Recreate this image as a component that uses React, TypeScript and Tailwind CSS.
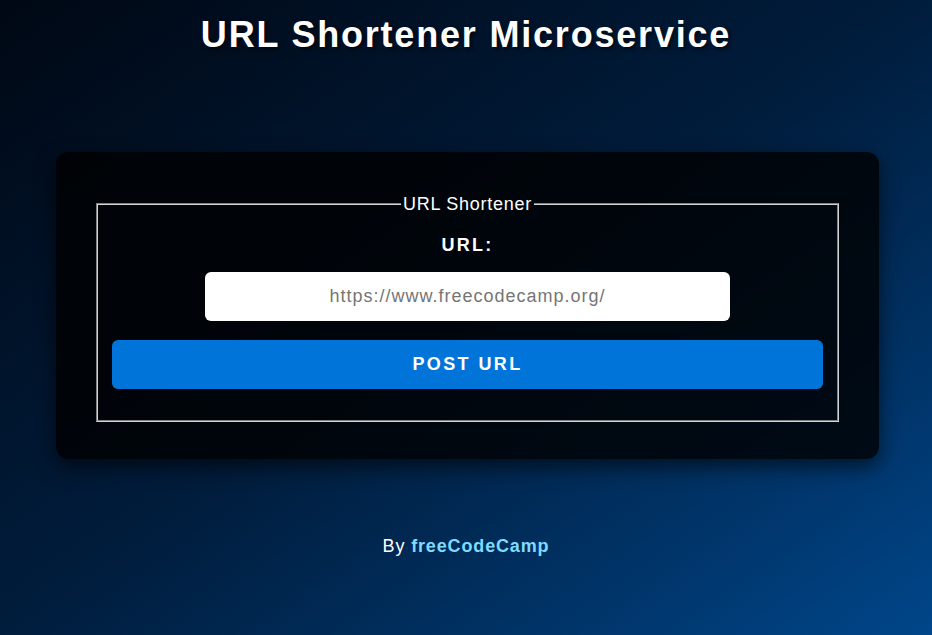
export default function App() {
  return (
    <div
      className="min-h-screen w-full bg-gradient-to-br from-[#000814] via-[#001d3d] to-[#00468a] text-white flex flex-col items-center"
      style={{ fontFamily: '"Liberation Sans", Arial, sans-serif' }}
    >
      {/* Title */}
      <h1 className="mt-[14px] text-[36px] font-bold leading-[42px] tracking-[1.8px] [text-shadow:2px_2px_4px_rgba(0,0,0,0.6)]">
        URL Shortener Microservice
      </h1>

      {/* Card */}
      <div className="mt-[96px] self-start ml-[56px] w-[823px] rounded-xl bg-black/80 shadow-[0_8px_20px_rgba(0,0,0,0.6)] px-10 pt-[42px] pb-[37px]">
        <form onSubmit={(e) => e.preventDefault()}>
          <fieldset className="border-2 [border-style:groove] border-[#d4d4d4] px-[14px] pb-[31px] flex flex-col items-center">
            <legend className="mx-auto px-[2px] text-[18px] leading-[20px] tracking-[0.75px]">URL Shortener</legend>
            <label htmlFor="url" className="mt-[20px] text-[18px] font-bold tracking-[2.2px] leading-[22px]">
              URL:
            </label>
            <input
              id="url"
              type="text"
              placeholder="https://www.freecodecamp.org/"
              className="mt-[16px] w-[525px] h-[49px] rounded-md bg-white text-center text-[18px] tracking-[1px] text-black placeholder:text-[#757575] outline-none"
            />
            <button
              type="submit"
              className="mt-[19px] w-full h-[49px] rounded-md bg-[#0074d9] text-[18px] font-bold tracking-[2.4px] text-white"
            >
              POST URL
            </button>
          </fieldset>
        </form>
      </div>

      {/* Footer */}
      <p className="mt-[74px] text-[18px] tracking-[0.85px]">
        By{' '}
        <a href="#" className="font-bold text-[#7fdbff]">
          freeCodeCamp
        </a>
      </p>
    </div>
  );
}
